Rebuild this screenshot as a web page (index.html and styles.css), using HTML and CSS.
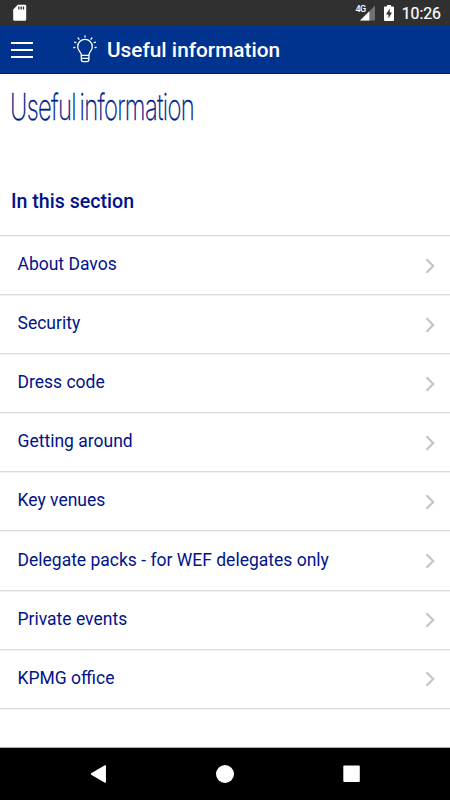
FILE: index.html
```html
<!DOCTYPE html>
<html lang="en">
<head>
<meta charset="utf-8">
<title>Useful information</title>
<link rel="stylesheet" href="styles.css">
</head>
<body>
<div class="status">
  <svg class="sd" width="16" height="20" viewBox="0 0 16 20"><path d="M5.800 1.800H13a1.200 1.200 0 0 1 1.200 1.200v13.600a1.200 1.200 0 0 1-1.200 1.200H2.400a1.200 1.200 0 0 1-1.200-1.200V6.600z" fill="#fff"/><path d="M6.900 3.600v2.800M9.200 3.600v2.800M11.500 3.600v2.800" stroke="#303030" stroke-width="1.300"/></svg>
  <span class="net">4G</span>
  <svg class="signal" width="16" height="16" viewBox="0 0 16 16"><path d="M0 16 16 0v16z" fill="#707070"/><path d="M0 16 10 6v10z" fill="#fff"/></svg>
  <svg class="battery" width="10" height="16" viewBox="0 0 10 16"><path d="M3 0h4v1.500h2a1 1 0 0 1 1 1V15a1 1 0 0 1-1 1H1a1 1 0 0 1-1-1V2.500a1 1 0 0 1 1-1h2z" fill="#fff"/><path d="M5.700 3.500 2 9.500h2.500v4L8 7.500H5.700z" fill="#303030"/></svg>
  <span class="clock">10:26</span>
</div>
<header class="bar">
  <div class="menu"><i></i><i></i><i></i></div>
  <svg class="bulb" width="24" height="28" viewBox="0 0 24 28" fill="none" stroke="#fff" stroke-width="1.300" stroke-linecap="round"><path d="M8.500 20.300c0-3.500-3.800-4.100-3.800-8.600a7.300 7.300 0 0 1 14.600 0c0 4.500-3.500 5.100-3.500 8.600z"/><path d="M8.300 20v4.600q0 2 2 2h3.600q2 0 2-2V20M8.500 23.400h7.200"/><path d="M12 .8v1.300M5.100 3l.9 1.200M18.900 3 18 4.200M1.600 7.200l1.200.5M22.400 7.200l-1.200.5M.9 12.500h1M22.100 12.500h1"/></svg>
  <span class="bar-title">Useful information</span>
</header>
<main>
  <h1><span>Useful information</span></h1>
  <h2>In this section</h2>
  <ul>
    <li>About Davos<svg class="chev" viewBox="0 0 10 16"><path d="M1.500 1.200 8.200 8l-6.700 6.800"/></svg></li>
    <li>Security<svg class="chev" viewBox="0 0 10 16"><path d="M1.500 1.200 8.200 8l-6.700 6.800"/></svg></li>
    <li>Dress code<svg class="chev" viewBox="0 0 10 16"><path d="M1.500 1.200 8.200 8l-6.700 6.800"/></svg></li>
    <li>Getting around<svg class="chev" viewBox="0 0 10 16"><path d="M1.500 1.200 8.200 8l-6.700 6.800"/></svg></li>
    <li>Key venues<svg class="chev" viewBox="0 0 10 16"><path d="M1.500 1.200 8.200 8l-6.700 6.800"/></svg></li>
    <li>Delegate packs - for WEF delegates only<svg class="chev" viewBox="0 0 10 16"><path d="M1.500 1.200 8.200 8l-6.700 6.800"/></svg></li>
    <li>Private events<svg class="chev" viewBox="0 0 10 16"><path d="M1.500 1.200 8.200 8l-6.700 6.800"/></svg></li>
    <li>KPMG office<svg class="chev" viewBox="0 0 10 16"><path d="M1.500 1.200 8.200 8l-6.700 6.800"/></svg></li>
  </ul>
</main>
<nav class="nav">
  <svg width="18" height="20" viewBox="0 0 18 20"><path d="M1.600 10 15.200 2v16z" fill="#fff" stroke="#fff" stroke-width="1.500" stroke-linejoin="round"/></svg>
  <svg width="18" height="20" viewBox="0 0 18 20"><circle cx="9" cy="10" r="9" fill="#fff"/></svg>
  <svg width="18" height="20" viewBox="0 0 18 20"><rect x=".3" y="1.600" width="16.500" height="16.500" rx="1" fill="#fff"/></svg>
</nav>
</body>
</html>
```
FILE: styles.css
```css
* { box-sizing: border-box; }
body {
  margin: 0;
  height: 800px;
  overflow: hidden;
  display: flex;
  flex-direction: column;
  background: #fff;
  color: #00138a;
  font-family: Roboto, sans-serif;
}
.status {
  height: 26px;
  flex: none;
  display: flex;
  align-items: center;
  padding: 0 9px 0 12px;
  background: #303030;
  color: #fff;
}
.sd { margin-right: auto; }
.net {
  font-size: 9px;
  line-height: 10px;
  letter-spacing: -.6px;
  margin: -8px -6px 0 0;
  font-weight: 500;
  z-index: 1;
}
.signal { width: 15px; height: 16px; margin-right: 9px; }
.battery { margin-right: 8px; }
.clock { font-size: 15.8px; font-weight: 400; line-height: 26px; padding-top: 2px; -webkit-text-stroke: .2px #fff; }
.bar {
  height: 48px;
  flex: none;
  display: flex;
  align-items: center;
  padding-left: 11px;
  background: #00338d;
  border-bottom: 1px solid #001c80;
  color: #fff;
}
.menu {
  width: 22px;
  display: flex;
  flex-direction: column;
  gap: 5px;
  margin-right: 40px;
}
.menu i { height: 2px; background: #fff; }
.bulb { margin: -1px 10px 0 0; }
.bar-title { font-size: 20.8px; font-weight: 500; line-height: 46px; }
main { flex: 1; }
h1 {
  margin: 0;
  height: 66px;
  padding: 11px 0 0 10px;
  font: 200 36px/44px Inter, sans-serif;
  letter-spacing: -1px;
  word-spacing: -4px;
  color: #001c8a;
}
h1 span {
  display: inline-block;
  transform: scaleX(.662);
  transform-origin: 0 0;
  white-space: nowrap;
  -webkit-text-stroke: .3px #001c8a;
}
h2 {
  margin: 0;
  height: 95px;
  padding: 48px 0 0 11px;
  font-size: 19.6px;
  font-weight: 500;
  line-height: 27px;
}
ul {
  margin: 0;
  padding: 0;
  list-style: none;
  border-top: 1px solid #dcdcdc;
  box-shadow: inset 0 1px #f3f3f3;
}
li {
  height: 59.100px;
  padding: 0 15px 2px 17.500px;
  border-bottom: 1px solid #dcdcdc;
  box-shadow: 0 1px #f3f3f3;
  display: flex;
  align-items: center;
  justify-content: space-between;
  font-size: 17.5px;
}
.chev {
  width: 10px;
  height: 16px;
  margin-top: 3px;
  fill: none;
  stroke: #c5c5c5;
  stroke-width: 2.200;
}
.nav {
  height: 53px;
  flex: none;
  display: flex;
  justify-content: space-between;
  align-items: center;
  padding: 0 89.500px;
  background: #000;
  border-top: 1px solid #a8b0a8;
}
```
